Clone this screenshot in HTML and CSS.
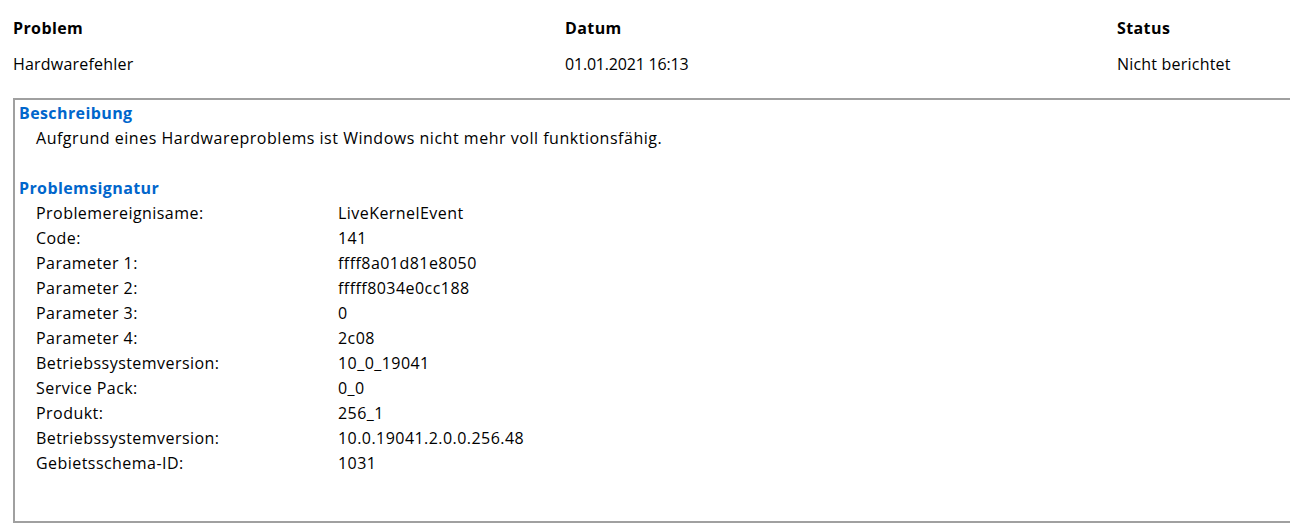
FILE: index.html
```html
<!DOCTYPE html>
<html lang="de">
<head>
<meta charset="utf-8">
<title>Problemdetails</title>
<link rel="stylesheet" href="styles.css">
</head>
<body>
<div class="summary">
  <div class="col"><div class="hd">Problem</div><div class="val">Hardwarefehler</div></div>
  <div class="col"><div class="hd">Datum</div><div class="val date">01.01.2021 16:13</div></div>
  <div class="col"><div class="hd">Status</div><div class="val">Nicht berichtet</div></div>
</div>
<div class="details">
  <div class="sec">Beschreibung</div>
  <div class="desc">Aufgrund eines Hardwareproblems ist Windows nicht mehr voll funktionsfähig.</div>
  <div class="sec gap">Problemsignatur</div>
  <div class="sig">
    <div>Problemereignisame:</div><div>LiveKernelEvent</div>
    <div>Code:</div><div>141</div>
    <div>Parameter 1:</div><div>ffff8a01d81e8050</div>
    <div>Parameter 2:</div><div>fffff8034e0cc188</div>
    <div>Parameter 3:</div><div>0</div>
    <div>Parameter 4:</div><div>2c08</div>
    <div>Betriebssystemversion:</div><div>10_0_19041</div>
    <div>Service Pack:</div><div>0_0</div>
    <div>Produkt:</div><div>256_1</div>
    <div>Betriebssystemversion:</div><div>10.0.19041.2.0.0.256.48</div>
    <div>Gebietsschema-ID:</div><div>1031</div>
  </div>
</div>
</body>
</html>
```
FILE: styles.css
```css
html, body {
  margin: 0;
  padding: 0;
  background: #ffffff;
  overflow: hidden;
}
body {
  font-family: "Segoe UI", "Open Sans", "Noto Sans", sans-serif;
  font-size: 16px;
  color: #000000;
  width: 1290px;
  height: 530px;
}
.summary {
  display: grid;
  grid-template-columns: 552px 552px 1fr;
  padding: 10px 0 0 13px;
}
.col .hd {
  font-weight: 700;
  height: 36px;
  line-height: 36px;
  letter-spacing: 0.4px;
}
.col .val {
  height: 36px;
  line-height: 36px;
  letter-spacing: 0.2px;
}
.col .val.date {
  letter-spacing: -0.2px;
}
.details {
  margin: 16px 0 0 13px;
  width: 1300px;
  height: 425px;
  border: 2px solid #a0a0a0;
  border-right: none;
  padding: 1px 0 0 4px;
  box-sizing: border-box;
  line-height: 25px;
  letter-spacing: 0.45px;
}
.sec {
  color: #0066cc;
  font-weight: 700;
  letter-spacing: 0.4px;
}
.sec.gap {
  margin-top: 25px;
}
.desc {
  padding-left: 17px;
  letter-spacing: 0.52px;
}
.sig {
  display: grid;
  grid-template-columns: 302px 1fr;
  padding-left: 17px;
}
```
